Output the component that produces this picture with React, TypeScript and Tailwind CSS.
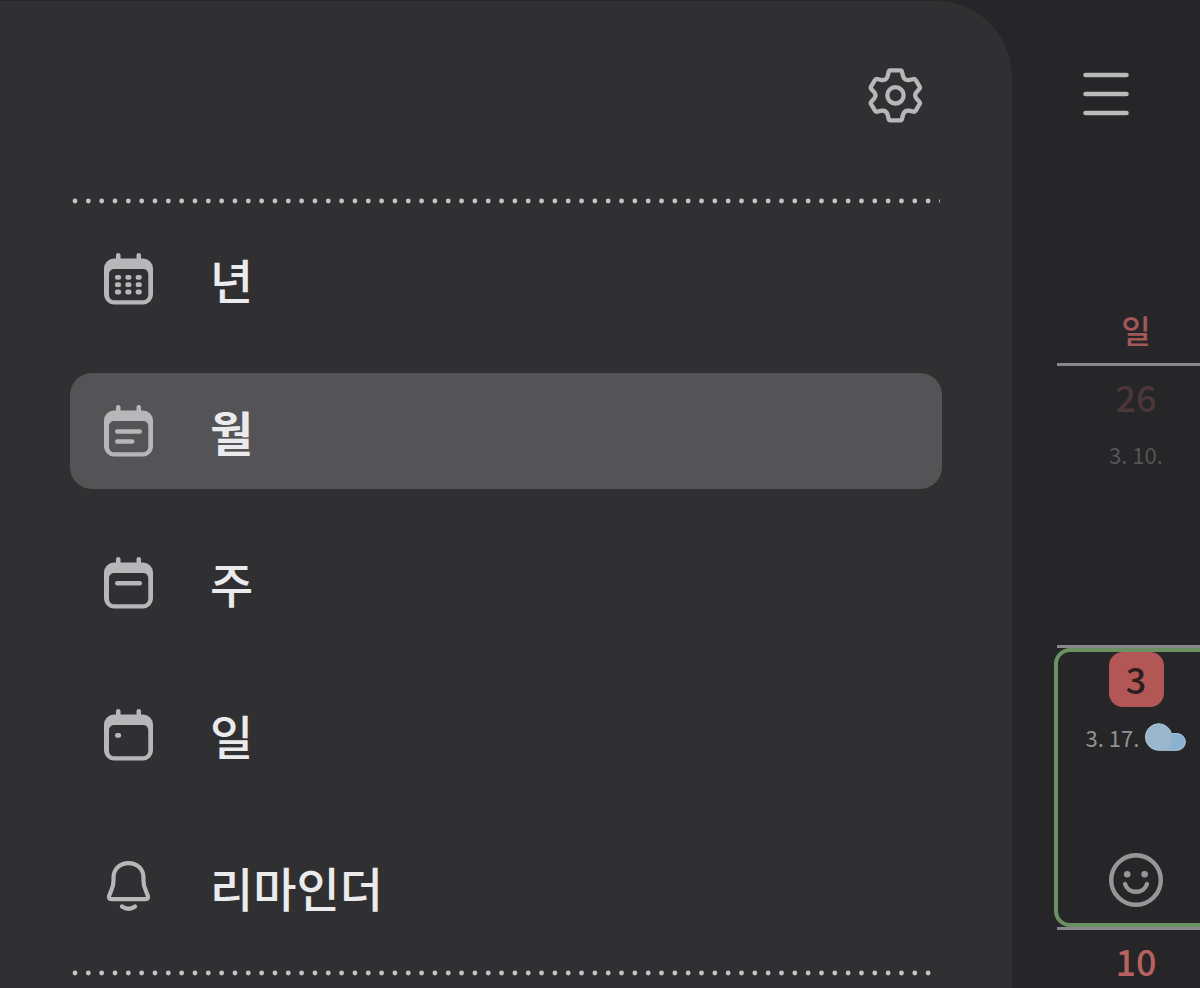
import type { ReactNode } from 'react';

function GearIcon() {
  return (
    <svg viewBox="54 50 165 171" className="h-[57px] w-[55px]" fill="none" stroke="currentColor" strokeWidth="13" aria-hidden="true">
      <path d="M121 60H151Q155 60 156 64L159 77Q163 91 177 89L190 86Q194 85 197 89L209 109Q211 113 208 116L199 126Q192 135 199 144L208 154Q211 157 209 161L197 181Q194 185 190 184L177 181Q163 179 159 193L156 206Q155 210 151 210H121Q117 210 116 206L113 193Q109 179 95 181L82 184Q78 185 75 181L63 161Q61 157 64 154L73 144Q80 135 73 126L64 116Q61 113 63 109L75 89Q78 85 82 86L95 89Q109 91 113 77L116 64Q117 60 121 60Z" />
      <circle cx="136.500" cy="135" r="24.500" />
    </svg>
  );
}

function MenuIcon() {
  return (
    <svg viewBox="0 0 46 44" className="h-[44px] w-[46px]" stroke="currentColor" strokeWidth="4.600" strokeLinecap="round" aria-hidden="true">
      <path d="M2.500 3H43.500M2.500 22H43.500M2.500 41H43.500" />
    </svg>
  );
}

function CalendarIcon({ children }: { children: ReactNode }) {
  return (
    <svg viewBox="0 0 49 52" className="h-[52px] w-[49px]" fill="currentColor" aria-hidden="true">
      <rect x="12" y="0" width="4.500" height="10" rx="2.200" />
      <rect x="32.500" y="0" width="4.500" height="10" rx="2.200" />
      <path
        fillRule="evenodd"
        d="M10 5.500H39A10 10 0 0 1 49 15.500V41.500A10 10 0 0 1 39 51.500H10A10 10 0 0 1 0 41.500V15.500A10 10 0 0 1 10 5.500ZM10 16A5 5 0 0 0 5 21V42A5.300 5.300 0 0 0 10 47.300H39A5.300 5.300 0 0 0 44.300 42V21A5 5 0 0 0 39 16Z"
      />
      {children}
    </svg>
  );
}

function YearIcon() {
  return (
    <CalendarIcon>
      {[24.3, 31.7, 39].map((y) =>
        [14, 24.4, 34.7].map((x) => (
          <rect key={`${x}-${y}`} x={x - 3.1} y={y - 2.4} width="6.200" height="4.800" rx="2.200" />
        )),
      )}
    </CalendarIcon>
  );
}

function MonthIcon() {
  return (
    <CalendarIcon>
      <rect x="11" y="24.200" width="27" height="4.500" rx="2.200" />
      <rect x="11" y="34.200" width="19.500" height="4.500" rx="2.200" />
    </CalendarIcon>
  );
}

function WeekIcon() {
  return (
    <CalendarIcon>
      <rect x="11" y="24" width="27" height="4.500" rx="2.200" />
    </CalendarIcon>
  );
}

function DayIcon() {
  return (
    <CalendarIcon>
      <rect x="11" y="24" width="6.200" height="4.800" rx="2.200" />
    </CalendarIcon>
  );
}

function BellIcon() {
  return (
    <svg viewBox="0 0 49 52" className="h-[52px] w-[49px]" fill="none" stroke="currentColor" strokeWidth="4.200" strokeLinecap="round" strokeLinejoin="round" aria-hidden="true">
      <path d="M24.500 2.100C15.500 2.100 9.500 8.200 9.500 16.700V19.500C9.500 24 9.200 26 7.300 29.300L5.200 34.700C4.400 37 5.200 38.200 7.500 38.200H41.500C43.800 38.200 44.600 37 43.800 34.700L41.700 29.300C39.800 26 39.500 24 39.500 19.500V16.700C39.500 8.200 33.500 2.100 24.500 2.100Z" />
      <path d="M18 45.500Q24.500 50 31 45.500" />
    </svg>
  );
}

function CloudIcon() {
  const outline = 'M13.7 .7A13.3 13.300 0 0 1 26.500 10.600H32A8.300 8.300 0 0 1 32 27.300H13.700A13.300 13.300 0 0 1 13.700 .7Z';
  return (
    <svg viewBox="0 0 41 28" className="h-[28px] w-[41px]" aria-hidden="true">
      <path d={outline} fill="#9ab7cd" />
      <path d="M26.500 10.600H32A8.300 8.300 0 0 1 32 27.300H20C25 25 28 18 26.500 10.600Z" fill="#8bb2cf" />
      <path d={outline} fill="none" stroke="#a9c4d6" />
    </svg>
  );
}

function SmileIcon() {
  return (
    <svg viewBox="0 0 54 54" className="size-[54px] text-[#979799]" aria-hidden="true">
      <circle cx="27" cy="27" r="24.800" fill="none" stroke="currentColor" strokeWidth="4.400" />
      <circle cx="18.200" cy="21.200" r="3.300" fill="currentColor" />
      <circle cx="35.600" cy="21.200" r="3.300" fill="currentColor" />
      <path d="M16 31C19 41.300 35 41.300 38 31" fill="none" stroke="currentColor" strokeWidth="4.400" strokeLinecap="round" />
    </svg>
  );
}

function DottedRule() {
  return (
    <svg className="block h-[6px] w-full" role="separator">
      <line x1="5" y1="3" x2="101%" y2="3" stroke="#c4c4c6" strokeWidth="4.800" strokeLinecap="round" strokeDasharray="0.01 13.320" />
    </svg>
  );
}

const items = [
  { label: '년', icon: <YearIcon /> },
  { label: '월', icon: <MonthIcon />, active: true },
  { label: '주', icon: <WeekIcon /> },
  { label: '일', icon: <DayIcon /> },
  { label: '리마인더', icon: <BellIcon /> },
];

export default function App() {
  return (
    <div className="flex h-screen overflow-hidden bg-[#262628] pt-px font-['Noto_Sans_CJK_KR',sans-serif]">
      <aside className="min-w-0 flex-1 rounded-tr-[76px] bg-[#303032] pr-[70px] pl-[70px]">
        <div className="flex h-[197px] items-start justify-end pt-[66px] pr-[19px] text-[#b6b7b9]">
          <button type="button" aria-label="설정">
            <GearIcon />
          </button>
        </div>
        <div className="pr-[2px]">
          <DottedRule />
        </div>
        <nav className="flex flex-col gap-[36px] pt-[17px] pb-[25px]">
          {items.map(({ label, icon, active }) => (
            <button
              key={label}
              type="button"
              aria-current={active ? 'page' : undefined}
              className={`flex h-[116px] items-center gap-[57px] rounded-[22px] pl-[34px] text-left text-[#b6b7b9] ${active ? 'bg-[#545456]' : ''}`}
            >
              {icon}
              <span className={`text-[47px] leading-[56px] text-[#ebebed] ${active ? 'font-bold' : 'font-medium'}`}>{label}</span>
            </button>
          ))}
        </nav>
        <div className="pr-[10px]">
          <DottedRule />
        </div>
      </aside>

      <main className="w-[188px] shrink-0 overflow-hidden pl-[45px]">
        <div className="flex h-[300px] items-start pt-[71px] pl-[26px] text-[#b9b9ba]">
          <button type="button" aria-label="메뉴">
            <MenuIcon />
          </button>
        </div>
        <section className="w-[158px] text-center">
          <h2 className="h-[62px] pt-[6px] text-[32px] leading-[44px] font-medium text-[#a45757]">일</h2>
          <div className="h-[282px] border-t-[3px] border-[#88888a]">
            <p className="pt-[8px] text-[36px] leading-[44px] font-medium text-[#4b3638]">26</p>
            <p className="pt-[18px] text-[22px] leading-[36px] text-[#555557]">3. 10.</p>
          </div>
          <div className="h-[282px] border-t-[3px] border-[#88888a]">
            <div className="-mx-[3px] flex h-full flex-col items-center rounded-[16px] border-4 border-[#6b9163]">
              <span className="flex size-[55px] items-center justify-center rounded-[14px] bg-[#b25756] pb-[4px] text-[36px] leading-[44px] font-medium text-[#2b1e20]">3</span>
              <p className="flex items-center gap-[6px] pt-[12px] text-[22px] leading-[36px] text-[#929294]">
                3. 17. <CloudIcon />
              </p>
              <div className="mt-auto pb-[16px]">
                <SmileIcon />
              </div>
            </div>
          </div>
          <div className="border-t-[3px] border-[#88888a]">
            <p className="pt-[8px] text-[36px] leading-[44px] font-medium text-[#b86260]">10</p>
          </div>
        </section>
      </main>
    </div>
  );
}
